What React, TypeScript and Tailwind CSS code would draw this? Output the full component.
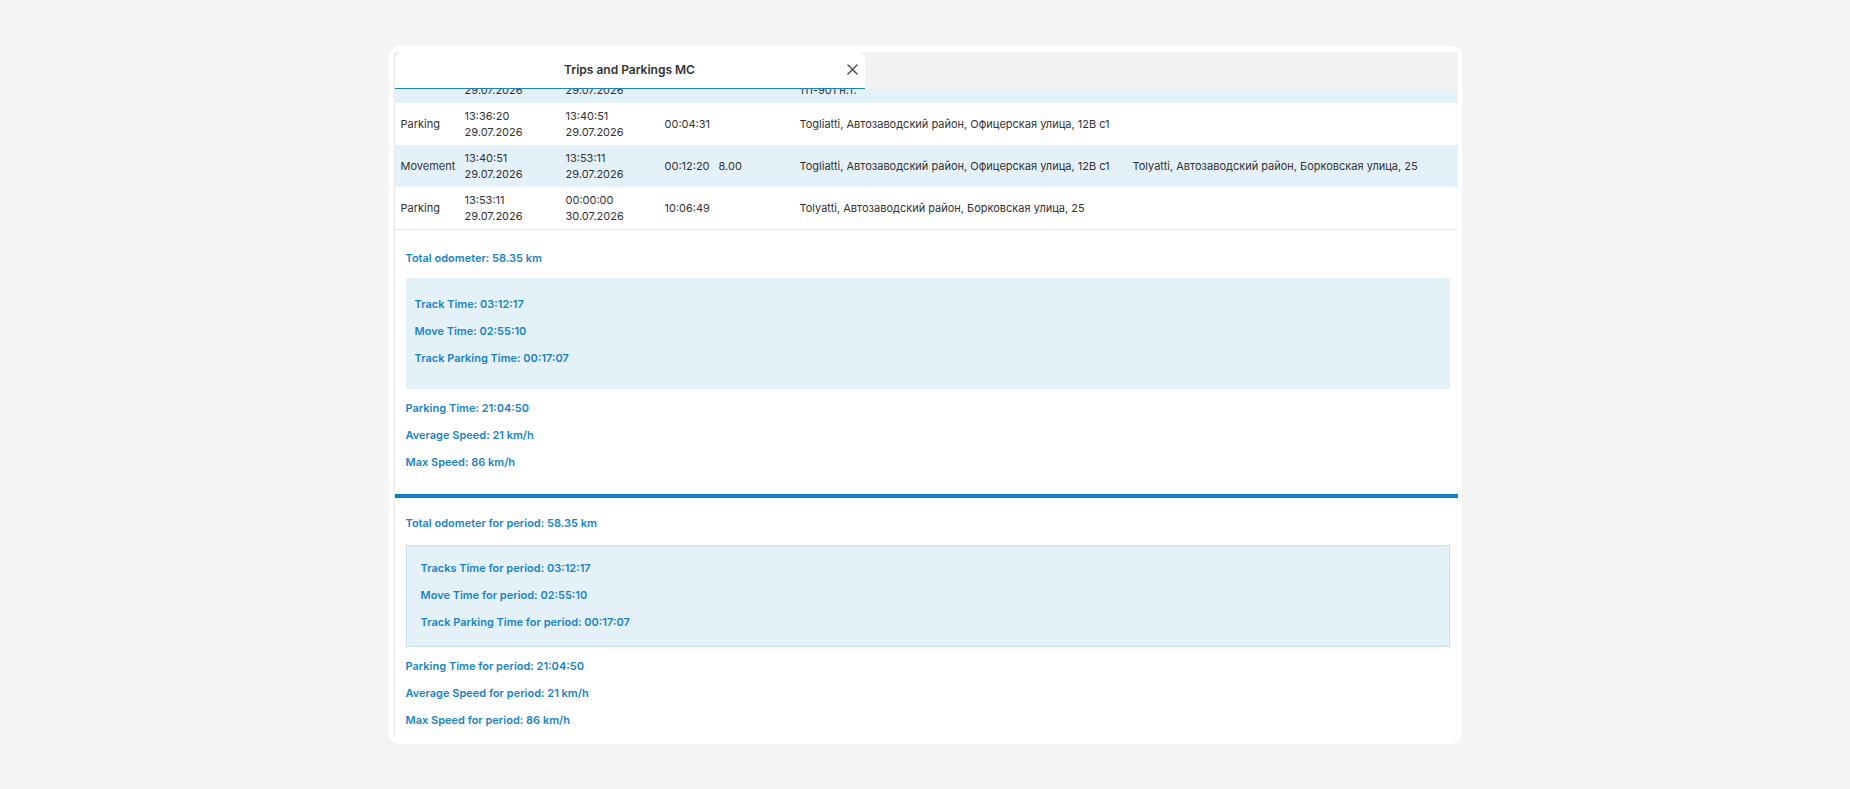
import React from 'react';

type Row = {
  type: string;
  begin: [string, string];
  end: [string, string];
  duration: string;
  distance?: string;
  from: string;
  to?: string;
  striped: boolean;
};

const ROWS: Row[] = [
  {
    type: 'Parking',
    begin: ['13:36:20', '29.07.2026'],
    end: ['13:40:51', '29.07.2026'],
    duration: '00:04:31',
    from: 'Togliatti, Автозаводский район, Офицерская улица, 12В с1',
    striped: false,
  },
  {
    type: 'Movement',
    begin: ['13:40:51', '29.07.2026'],
    end: ['13:53:11', '29.07.2026'],
    duration: '00:12:20',
    distance: '8.00',
    from: 'Togliatti, Автозаводский район, Офицерская улица, 12В с1',
    to: 'Tolyatti, Автозаводский район, Борковская улица, 25',
    striped: true,
  },
  {
    type: 'Parking',
    begin: ['13:53:11', '29.07.2026'],
    end: ['00:00:00', '30.07.2026'],
    duration: '10:06:49',
    from: 'Tolyatti, Автозаводский район, Борковская улица, 25',
    striped: false,
  },
];

const COLS = 'grid grid-cols-[64px_101px_99px_51px_84px_333px_1fr]';

function TripRow({ row }: { row: Row }) {
  return (
    <div
      className={`${COLS} h-[42px] shrink-0 items-center text-[11px] leading-[16px] text-[#333333] ${
        row.striped ? 'bg-[#e4f1f9]' : 'bg-white'
      }`}
    >
      <div className="whitespace-nowrap pl-[6px]">{row.type}</div>
      <div className="pl-[6px]">
        <div>{row.begin[0]}</div>
        <div>{row.begin[1]}</div>
      </div>
      <div className="pl-[6px]">
        <div>{row.end[0]}</div>
        <div>{row.end[1]}</div>
      </div>
      <div className="pl-[6px]">{row.duration}</div>
      <div className="pl-[9px]">{row.distance}</div>
      <div className="whitespace-nowrap pl-[6px]">{row.from}</div>
      <div className="whitespace-nowrap pl-[6px]">{row.to}</div>
    </div>
  );
}

// last lines of the row that is scrolled under the sticky header
function ScrolledRow() {
  return (
    <div className={`${COLS} h-[14px] items-start overflow-hidden bg-[#e4f1f9] text-[11px] leading-[16px] text-[#333333]`}>
      <div />
      <div className="-mt-[7px] pl-[6px]">29.07.2026</div>
      <div className="-mt-[7px] pl-[6px]">29.07.2026</div>
      <div />
      <div />
      <div className="-mt-[7px] whitespace-nowrap pl-[6px]">111-901 н.т.</div>
      <div />
    </div>
  );
}

function Stat({ children }: { children: React.ReactNode }) {
  return <p className="text-[11px] font-semibold leading-[13px] text-[#1a84c5]">{children}</p>;
}

export default function App() {
  return (
    <div
      className="flex min-h-screen items-center justify-center bg-[#f4f4f4]"
      style={{ fontFamily: 'Inter, "Noto Sans", sans-serif' }}
    >
      <div className="w-[1073px] rounded-[10px] bg-white pb-[7px] pl-[5px] pr-[4px] pt-[6px]">
        <div className="flex flex-col border-l border-[#e8e8e8]">
          {/* Header */}
          <div className="flex h-[37px] bg-[#f2f2f2]">
            <div className="flex w-[470px] items-center rounded-t-[8px] border-b border-[#1a84c5] bg-white">
              <div className="w-[24px]" />
              <div className="flex-1 text-center text-[12px] font-semibold text-[#333333]">
                Trips and Parkings MC
              </div>
              <button type="button" className="flex w-[24px] items-center justify-center text-[#555555]">
                <svg width="11" height="11" viewBox="0 0 11 11" fill="none">
                  <path d="M1 1L10 10M10 1L1 10" stroke="currentColor" strokeWidth="1.6" strokeLinecap="round" />
                </svg>
              </button>
            </div>
          </div>

          {/* Table */}
          <ScrolledRow />
          {ROWS.map((row, i) => (
            <TripRow key={i} row={row} />
          ))}

          {/* Summary for track */}
          <div className="border-t border-[#e6e6e6] pb-[25px] pl-[11px] pr-[8px] pt-[22px]">
            <Stat>Total odometer: 58.35 km</Stat>
            <div className="mt-[13px] flex flex-col gap-[14px] bg-[#e4f1f9] pb-[24px] pl-[9px] pt-[20px]">
              <Stat>Track Time: 03:12:17</Stat>
              <Stat>Move Time: 02:55:10</Stat>
              <Stat>Track Parking Time: 00:17:07</Stat>
            </div>
            <div className="mt-[13px] flex flex-col gap-[14px]">
              <Stat>Parking Time: 21:04:50</Stat>
              <Stat>Average Speed: 21 km/h</Stat>
              <Stat>Max Speed: 86 km/h</Stat>
            </div>
          </div>

          {/* Summary for period */}
          <div className="border-t-4 border-[#0a84c9] pb-[10px] pl-[11px] pr-[8px] pt-[19px]">
            <Stat>Total odometer for period: 58.35 km</Stat>
            <div className="mt-[15px] flex flex-col gap-[14px] border border-[#c9e2f3] bg-[#e4f1f9] pb-[17px] pl-[14px] pt-[16px]">
              <Stat>Tracks Time for period: 03:12:17</Stat>
              <Stat>Move Time for period: 02:55:10</Stat>
              <Stat>Track Parking Time for period: 00:17:07</Stat>
            </div>
            <div className="mt-[13px] flex flex-col gap-[14px]">
              <Stat>Parking Time for period: 21:04:50</Stat>
              <Stat>Average Speed for period: 21 km/h</Stat>
              <Stat>Max Speed for period: 86 km/h</Stat>
            </div>
          </div>
        </div>
      </div>
    </div>
  );
}
